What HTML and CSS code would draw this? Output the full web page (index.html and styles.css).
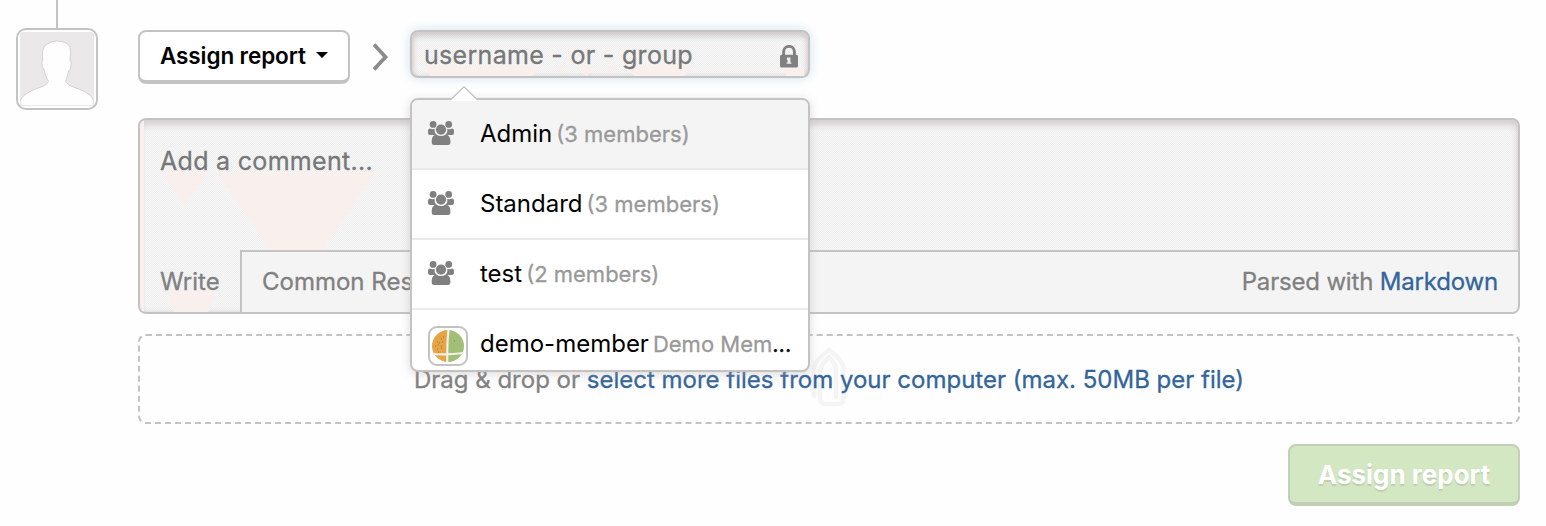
FILE: index.html
```html
<!DOCTYPE html>
<html lang="en">
<head>
<meta charset="utf-8">
<title>Assign report</title>
<link rel="stylesheet" href="styles.css">
</head>
<body>
<svg width="0" height="0" class="defs">
  <symbol id="group" viewBox="0 0 26 24">
    <circle cx="5.1" cy="3.4" r="3.4"/><circle cx="20.7" cy="3.4" r="3.4"/>
    <path d="M1.5 7.4q3.3 1.3 5.2.3Q6 11.500 8.300 14H2Q0 14 0 12V9.500Q.2 8 1.500 7.400ZM24.500 7.400q-3.300 1.300-5.200.3Q20 11.500 17.700 14H24Q26 14 26 12V9.500Q25.800 8 24.500 7.400Z"/>
    <circle cx="13" cy="8.600" r="5.100"/>
    <path d="M8.300 13.500q4.700 3 9.400 0 4.700.8 4.700 6.500V21.500Q22.400 24 19.800 24H6.300Q3.700 24 3.700 21.500V20Q3.700 14.300 8.300 13.500Z"/>
  </symbol>
</svg>
<div class="timeline">
  <aside class="rail">
    <div class="line"></div>
    <div class="avatar">
      <svg viewBox="0 0 74 74" width="74" height="74">
        <rect width="74" height="74" rx="3" fill="#eae8e9"/>
        <path d="M0 74V69Q2 63 13 58L22 54.500Q27 53 28.500 49.500Q25 44 24.200 38Q21.500 35 21.800 30Q22 28.500 23 28Q21 17 26 12.500Q32 9 37 9Q48 9.500 50 15Q51 21 50 28Q51.700 30 51 34Q50.500 38 48.500 39Q47.500 45 45.500 49.500Q48 53 52 54.500L64 59Q72 63 74 69V74Z" fill="#fefefe" stroke="#d7d1d1"/>
      </svg>
    </div>
  </aside>
  <main class="main">
    <div class="actions">
      <button class="select"><span>Assign report</span><i class="caret"></i></button>
      <svg class="chevron" width="16" height="28" viewBox="0 0 16 28"><path d="M1 1.500 12.500 14 1 26.500" fill="none" stroke="#8b8b8b" stroke-width="3.800"/></svg>
      <div class="assignee">
        <div class="field">
          <svg class="tint" width="396" height="44" viewBox="0 0 396 44"><path d="M12 33H130L120 44H18ZM141 34h14l-7 7ZM164 34h20l-10 10ZM192 34h14l-7 7ZM212 33h70l-10 11H222ZM370 35h22v9h-18Z" fill="#f9f0ee"/></svg>
          <span class="placeholder">username - or - group</span>
          <svg class="lock" width="18" height="23" viewBox="0 0 18 23"><path d="M3.600 11V6.800a5.400 5.400 0 0 1 10.800 0V11" fill="none" stroke="#808080" stroke-width="2.900"/><rect y="9.800" width="18" height="12.700" rx="1.500" fill="#808080"/><path d="M7.200 12.500h3.200v4.900h1v1.400H6.600v-1.400h1v-2.700h-1Z" fill="#eee"/></svg>
        </div>
        <div class="menu">
          <svg class="arrow" width="26" height="15" viewBox="0 0 26 15"><path d="M0 13.500 13 .8 26 13.500V15H0Z" fill="#fff"/><path d="M0 13.500 13 .8 26 13.500" fill="none" stroke="#c2c2c2" stroke-width="1.300"/></svg>
          <ul class="options">
            <li class="option active"><svg class="group"><use href="#group"/></svg><b class="name">Admin</b><span class="note">(3 members)</span></li>
            <li class="option"><svg class="group"><use href="#group"/></svg><b class="name">Standard</b><span class="note">(3 members)</span></li>
            <li class="option"><svg class="group"><use href="#group"/></svg><b class="name">test</b><span class="note">(2 members)</span></li>
            <li class="option"><span class="thumb"><svg width="32" height="32" viewBox="0 0 32 32"><path d="M16 0a16 16 0 0 0 0 32Z" fill="#e5a546"/><path d="M16 0a16 16 0 0 1 0 32Z" fill="#a1bf77"/><path d="M16.500 0Q15 12 15.300 32M.5 24Q16 25 32 23" fill="none" stroke="#f3f0e8" stroke-width="2.200"/><path d="M3 16h1m1-4h1m3-3h1m-3 4h1m2-1h1M6 15h1m2 1h1M5 19h1m3-1h1m-4 4h1M22 11h1M11 7h1" stroke="#a07538"/></svg></span><b class="name">demo-member</b><span class="note">Demo Mem<em>...</em></span></li>
          </ul>
        </div>
      </div>
    </div>
    <section class="editor">
      <svg class="tint" width="400" height="192" viewBox="0 0 400 192"><path d="M21 52H68L45 86ZM76 52H236L183 130H130ZM26 170H78L68 192H34ZM0 0H4V192H0Z" fill="#f9f0ee"/></svg>
      <div class="comment">Add a comment...</div>
      <div class="tabs">
        <div class="tab">Write</div>
        <div class="bar"><span>Common Responses</span><span class="parsed">Parsed with <a>Markdown</a></span></div>
      </div>
    </section>
    <section class="drop">
      <svg class="clip" width="36" height="60" viewBox="0 0 36 60"><path d="M3 49V21Q4 13 18 3Q32 13 32.500 21V51Q32.500 57 27 57H14Q9 57 9 51V24Q10 17 18 10Q25 17 25 24V50" fill="none" stroke="#f4f4f4" stroke-width="4.500" stroke-linecap="round"/></svg>
      <p class="hint">Drag &amp; drop or <a>select more files from your computer (max. 50MB per file)</a></p>
    </section>
    <button class="submit">Assign report</button>
  </main>
</div>
</body>
</html>
```
FILE: styles.css
```css
* { box-sizing: border-box; }
body { margin: 0; background: #fefefe; color: #808080; font: 24px/30px Inter, "Noto Sans", sans-serif; height: 526px; overflow: hidden; }
html { overflow: hidden; }
ul, p { margin: 0; padding: 0; list-style: none; }
button { font-family: inherit; }
svg { display: block; flex: none; }
a { color: #33659b; }
.defs { position: absolute; }
.timeline { display: flex; gap: 40px; padding: 0 26px 0 16px; }
.rail { width: 82px; display: flex; flex-direction: column; align-items: center; }
.line { width: 2px; height: 28px; background: #c3c3c3; }
.avatar { width: 82px; height: 82px; border: 2px solid #c3c3c3; border-radius: 10px; padding: 2px; background: #fff; }
.main { flex: 1; display: flex; flex-direction: column; padding-top: 30px; }
.actions { display: flex; height: 88px; align-items: flex-start; }
.select { display: flex; align-items: center; gap: 10px; width: 212px; height: 54px; padding: 0 0 1px 20px; background: #fff; border: 2px solid #c3c3c3; border-bottom-width: 4px; border-radius: 8px; color: #000; font-size: 22.500px; font-weight: 600; letter-spacing: -0.1px; white-space: nowrap; }
.caret { border: 6px solid transparent; border-top-color: #000; border-bottom: 0; margin-bottom: 2px; }
.chevron { margin: 13px 21px 0 23px; }
.assignee { position: relative; width: 400px; }
.field { display: flex; align-items: center; justify-content: space-between; position: relative; height: 48px; padding: 2px 10px 0 12px; border: 2px solid #c3c3c3; border-radius: 8px; background: repeating-conic-gradient(#eee 0 25%, #f8f8f8 0 50%) 0 0 / 2px 2px; box-shadow: inset 0 4px 6px #cfc9c9, inset 0 0 5px #ddd5d5, 0 0 12px #d3e2ec; }
.placeholder, .lock { position: relative; }
.placeholder { font-size: 25px; color: #777; -webkit-text-stroke: 0.3px; letter-spacing: 0.3px; }
.lock { top: 1px; }
.tint { position: absolute; left: 0; top: 0; }
.menu { position: absolute; z-index: 2; top: 68px; left: 0; width: 400px; height: 274px; border: 2px solid #c3c3c3; border-radius: 8px; background: #fff; box-shadow: 0 2px 10px #b3a9a970; }
.arrow { position: absolute; left: 39px; top: -14px; }
.options { height: 270px; overflow: hidden; border-radius: 6px; }
.option { display: flex; align-items: center; height: 70px; padding: 0 16px; border-bottom: 2px solid #eaeaea; white-space: nowrap; }
.option.active { background: #f4f4f4; }
.option:last-child { border: 0; padding-bottom: 2px; }
.group { width: 26px; height: 24px; margin: 0 27px 2px 0; fill: #808080; }
.name { font-size: 24px; font-weight: 400; color: #000; margin-left: -1px; }
.note { margin-left: 4px; font-size: 22px; color: #999; -webkit-text-stroke: 0.3px; }
.note em { color: #000; font-style: normal; }
.thumb { position: relative; top: 2px; width: 40px; height: 40px; flex: none; border: 2px solid #c3c3c3; border-radius: 9px; padding: 2px; margin-right: 13px; background: #fff; }
.editor { position: relative; display: flex; flex-direction: column; height: 196px; border: 2px solid #c3c3c3; border-radius: 8px; overflow: hidden; background: repeating-conic-gradient(#eee 0 25%, #f8f8f8 0 50%) 0 0 / 2px 2px; box-shadow: inset 0 5px 7px #d5d0d0, inset 0 0 5px #ddd5d5; }
.comment { position: relative; height: 130px; padding: 26px 20px; color: #777; font-size: 25px; letter-spacing: 0.3px; -webkit-text-stroke: 0.3px; }
.tabs { position: relative; display: flex; height: 62px; font-size: 24px; -webkit-text-stroke: 0.3px; }
.tab { width: 100px; padding: 17px 0 0 20px; }
.bar { flex: 1; display: flex; justify-content: space-between; padding: 15px 20px 0; border: solid #c3c3c3; border-width: 2px 0 0 2px; background: #f4f4f4; }
.parsed { letter-spacing: -0.18px; }
.drop { position: relative; height: 90px; margin-top: 20px; border: 2px dashed #c3c3c3; border-radius: 8px; padding-top: 29px; text-align: center; }
.clip { position: absolute; left: 671px; top: 11px; }
.hint { position: relative; font-size: 24px; white-space: nowrap; -webkit-text-stroke: 0.3px; }
.submit { align-self: flex-end; width: 232px; height: 62px; margin-top: 20px; padding: 1px 0 0; border: 2px solid #c1d0b5; border-bottom-width: 4px; border-radius: 8px; background: #d3e7c2; color: #fff; font-size: 26px; font-weight: 700; text-shadow: 0 2px 1px #bdcfb0; }
```
